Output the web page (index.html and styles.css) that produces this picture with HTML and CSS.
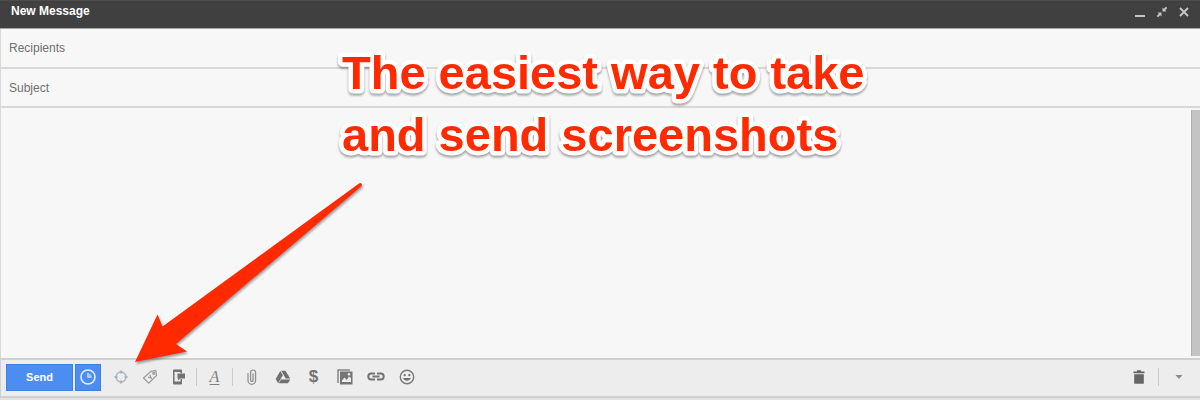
FILE: index.html
```html
<!DOCTYPE html>
<html lang="en">
<head>
  <meta charset="UTF-8" />
  <meta name="viewport" content="width=device-width, initial-scale=1.0"/>
  <title>New Message</title>
  <link rel="stylesheet" href="styles.css">
</head>
<body>
  <form class="compose">
    <header class="titlebar">
      <h1 class="title">New Message</h1>
      <div class="window-buttons">
        <button type="button" aria-label="Minimize">
          <svg width="12" height="12" viewBox="0 0 12 12"><path d="M1 9h10v2H1z"/></svg>
        </button>
        <button type="button" aria-label="Exit full screen">
          <svg width="12" height="12" viewBox="0 0 12 12"><path d="M6.500 1.500v4h4L9.200 4.200 11.300 2.100 9.900.7 7.800 2.800zM5.500 10.500v-4h-4L2.800 7.800.7 9.900l1.400 1.400 2.100-2.100z"/></svg>
        </button>
        <button type="button" aria-label="Close">
          <svg width="12" height="12" viewBox="0 0 12 12"><path d="M2 2l8 8M10 2l-8 8" fill="none" stroke="#c4c4c4" stroke-width="2"/></svg>
        </button>
      </div>
    </header>

    <input class="field" type="text" name="to" placeholder="Recipients" aria-label="Recipients" />
    <input class="field" type="text" name="subject" placeholder="Subject" aria-label="Subject" />

    <div class="message">
      <textarea name="body" aria-label="Message body"></textarea>
      <div class="scrollbar"></div>
    </div>

    <div class="toolbar">
      <button type="submit" class="blue send">Send</button>
      <button type="button" class="blue later" aria-label="Send later">
        <svg width="18" height="18" viewBox="0 0 18 18" fill="none" stroke="#e4edfb"><circle cx="9" cy="9" r="7" stroke-width="1.600"/><path d="M9 5V9h3.500" stroke-width="1.300"/><path d="M9 9V5.500A3.500 3.500 0 0 1 12.500 9z" fill="#a9c8f6" stroke="none"/></svg>
      </button>

      <div class="group narrow">
        <button type="button" aria-label="Screenshot">
          <svg width="16" height="16" viewBox="0 0 16 16"><circle cx="8" cy="8" r="5" fill="none" stroke="#b4b4b4" stroke-width="1.400"/><path d="M8 1.500v3M8 11.500v3M1.500 8h3M11.500 8h3" stroke="#9fb6c8" stroke-width="2.200"/></svg>
        </button>
        <button type="button" aria-label="Label">
          <svg width="16" height="16" viewBox="0 0 16 16" fill="none" stroke="#999" stroke-width="1.200"><path d="M9 2.300l4.800-.8.700 5L6.800 14.200 1.500 9z"/><circle cx="11.700" cy="4.300" r="1"/><path d="M8 6l1.500 4M6 8l3 1"/></svg>
        </button>
        <button type="button" aria-label="Text message">
          <svg width="16" height="16" viewBox="0 0 16 16"><path fill="#737373" fill-rule="evenodd" d="M3 .5h7q1 0 1 1V4H9.500V3H3.500v9.500h6V10H11v4.500q0 1-1 1H3q-1 0-1-1v-13q0-1 1-1z"/><path fill="#737373" d="M6.500 4.500h7.500v5H9L7 11.500V9.500h-.5z"/></svg>
        </button>
      </div>
      <span class="divider"></span>
      <div class="group narrow">
        <button type="button" class="format" aria-label="Formatting options">A</button>
      </div>
      <span class="divider"></span>
      <div class="group">
        <button type="button" aria-label="Attach files">
          <svg width="16" height="16" viewBox="0 0 16 16"><path d="M4 4v7.500a3.800 3.800 0 0 0 7.600 0V3.500a2.500 2.500 0 0 0-5 0v7.700a1.200 1.200 0 0 0 2.500 0V4.500" fill="none" stroke="#8c8c8c" stroke-width="1.200"/></svg>
        </button>
        <button type="button" aria-label="Insert from Drive">
          <svg width="16" height="16" viewBox="0 0 16 16" fill="#707070"><path d="M5.300 2L.7 10l2.400 4.200 4.700-8z"/><path d="M6.200 1.800h4.300L15.200 9.500h-4.500z"/><path d="M6 10.400h9.300L13 14.200H3.800z"/></svg>
        </button>
        <button type="button" class="money" aria-label="Attach money">$</button>
        <button type="button" aria-label="Insert photo">
          <svg width="16" height="16" viewBox="0 0 16 16"><path d="M1 14V1h12" fill="none" stroke="#858585" stroke-width="1.500"/><path fill="#757575" fill-rule="evenodd" d="M3 2.500h12.500v13H3zM5 13h9V9l-2-1.500L9.800 11 7.500 8.500 5 11.500z"/><circle cx="12" cy="5.300" r="1.300" fill="#eee"/></svg>
        </button>
        <button type="button" aria-label="Insert link">
          <svg width="18" height="16" viewBox="0 0 18 16" fill="none" stroke="#757575" stroke-width="2"><path d="M8 10.500H4.300a3 3 0 0 1 0-6H8M10 4.500h3.700a3 3 0 0 1 0 6H10M5.500 7.500h7"/></svg>
        </button>
        <button type="button" aria-label="Insert emoticon">
          <svg width="16" height="16" viewBox="0 0 16 16"><circle cx="8" cy="8" r="6.700" fill="none" stroke="#7b7b7b" stroke-width="1.400"/><circle cx="5.700" cy="6.200" r="1.100" fill="#707070"/><circle cx="10.300" cy="6.200" r="1.100" fill="#707070"/><path d="M4.200 9h7.600a4 4 0 0 1-7.600 0z" fill="#707070"/></svg>
        </button>
      </div>

      <div class="group right">
        <button type="button" aria-label="Discard draft">
          <svg width="16" height="16" viewBox="0 0 16 16" fill="#666"><path d="M2.500 2.500h3.500V1.300h4v1.200h3.500v1.800h-11zM3.200 5.300h9.600v9.400H3.200z"/></svg>
        </button>
        <span class="divider"></span>
        <button type="button" aria-label="More options">
          <svg width="8" height="4" viewBox="0 0 8 4"><path d="M.5 0h7L4 4z" fill="#8a8a8a"/></svg>
        </button>
      </div>
    </div>
  </form>

  <svg class="annotation" width="900" height="400" viewBox="0 0 900 400">
    <g class="callout">
      <text x="342" y="89">The easiest way to take</text>
      <text x="342" y="151">and send screenshots</text>
    </g>
    <path class="arrow" d="M135 362L157.500 314.500 162.500 326.500 359 183.500Q361 182.500 361.800 184 362.300 185.500 360.500 187L176 344 187 351.500z"/>
  </svg>
</body>
</html>
```

FILE: styles.css
```css
* {
  box-sizing: border-box;
}
body {
  margin: 0;
  font-family: "Liberation Sans", Arial, sans-serif;
  background: #e2e2e2;
  position: relative;
}
button {
  padding: 0;
  border: none;
  background: none;
  font-family: inherit;
  cursor: pointer;
}

/* Compose window */
.compose {
  display: flex;
  flex-direction: column;
  height: 100vh;
  padding-bottom: 2px;
}
.titlebar {
  display: flex;
  justify-content: space-between;
  height: 29px;
  padding: 0 10px 0 11px;
  background: #404040;
  border-top: 1px solid #4c4c4c;
  border-bottom: 1px solid #a8a8a8;
}
.title {
  margin: 0;
  font-size: 12px;
  line-height: 20px;
  color: #fff;
}
.window-buttons {
  display: flex;
  gap: 10px;
  height: 22px;
}
.window-buttons svg {
  display: block;
  fill: #c4c4c4;
}
.field {
  flex: none;
  height: 40px;
  padding: 0 8px;
  border: solid #d8d8d8;
  border-width: 0 0 2px 1px;
  border-radius: 0;
  background: #f7f7f7;
  font-family: inherit;
  font-size: 12px;
  outline: none;
}
.field + .field {
  height: 39px;
}
.field::placeholder {
  color: #707070;
}
.message {
  flex: 1;
  display: flex;
  min-height: 0;
  padding: 2px 0;
  background: #f7f7f7;
  border-left: 1px solid #d8d8d8;
}
.message textarea {
  flex: 1;
  border: none;
  background: none;
  resize: none;
  outline: none;
}
.scrollbar {
  width: 9px;
  background: #c4c4c4;
  border-left: 1px solid #b2b2b2;
}

/* Toolbar */
.toolbar {
  display: flex;
  align-items: center;
  height: 40px;
  padding: 0 6px 2px 5px;
  background: #ededed;
  border: solid #d0d0d0;
  border-width: 2px 0 2px 1px;
}
.toolbar svg {
  display: block;
  margin: 0 auto;
}
.blue {
  height: 27px;
  border: 1px solid #3f7fe0;
  background: #4b8df1;
  color: #fff;
}
.send {
  width: 67px;
  margin-right: 2px;
  font-size: 11px;
  font-weight: bold;
}
.later {
  width: 26px;
  margin-right: 5px;
}
.group {
  display: flex;
  align-items: center;
}
.group button {
  width: 31px;
  height: 27px;
}
.narrow button {
  width: 29px;
}
.divider {
  width: 1px;
  height: 18px;
  margin: 0 3px;
  background: #cacaca;
}
.group .format {
  font-family: "Liberation Serif", "Times New Roman", serif;
  font-size: 16px;
  font-style: italic;
  text-decoration: underline;
  text-underline-offset: 2px;
  color: #808080;
}
.group .money {
  font-size: 17px;
  font-weight: bold;
  color: #737373;
}
.right {
  margin-left: auto;
}
.right .divider {
  margin: 0 4px;
}

/* Annotation over the window */
.annotation {
  position: absolute;
  top: 0;
  left: 0;
  pointer-events: none;
}
.callout {
  font-size: 47px;
  font-weight: bold;
  fill: #ff2a00;
  stroke: #fff;
  stroke-width: 9px;
  stroke-linejoin: round;
  paint-order: stroke;
  filter: drop-shadow(0 2px 1px rgba(0, 0, 0, 0.35));
}
.arrow {
  fill: #ff2a00;
  filter: drop-shadow(1px 2px 1px rgba(0, 0, 0, 0.35));
}
```
